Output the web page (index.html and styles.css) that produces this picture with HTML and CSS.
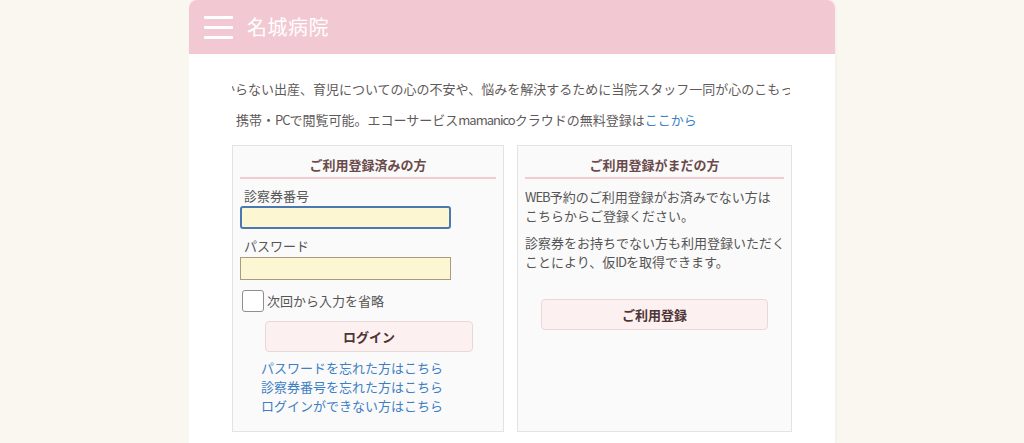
FILE: index.html
```html
<!DOCTYPE html>
<html lang="ja">
<head>
<meta charset="utf-8">
<title>名城病院</title>
<link rel="stylesheet" href="styles.css">
</head>
<body>
<div class="page">
  <header class="header">
    <span class="burger" aria-label="menu"><i></i><i></i><i></i></span>
    <h1 class="title">名城病院</h1>
  </header>
  <main class="content">
    <div class="marquee"><span class="marquee-text">分からない出産、育児についての心の不安や、悩みを解決するために当院スタッフ一同が心のこもったサポートをいたします。</span></div>
    <p class="note">携帯・<span class="latin">PC</span>で閲覧可能。エコーサービス<span class="latin">mamanico</span>クラウドの無料登録は<a class="link" href="#">ここから</a></p>
    <div class="boxes">
      <section class="box">
        <h2 class="box-title">ご利用登録済みの方</h2>
        <label class="field-label">診察券番号</label>
        <div class="input input-focus"></div>
        <label class="field-label field-label-2">パスワード</label>
        <div class="input"></div>
        <div class="check-row"><span class="checkbox"></span><span>次回から入力を省略</span></div>
        <div class="btn btn-login">ログイン</div>
        <ul class="links">
          <li><a class="link" href="#">パスワードを忘れた方はこちら</a></li>
          <li><a class="link" href="#">診察券番号を忘れた方はこちら</a></li>
          <li><a class="link" href="#">ログインができない方はこちら</a></li>
        </ul>
      </section>
      <section class="box">
        <h2 class="box-title">ご利用登録がまだの方</h2>
        <p class="box-text"><span class="latin">WEB</span>予約のご利用登録がお済みでない方は<br>こちらからご登録ください。</p>
        <p class="box-text box-text-2">診察券をお持ちでない方も利用登録いただく<br>ことにより、仮<span class="latin">ID</span>を取得できます。</p>
        <div class="btn btn-register">ご利用登録</div>
      </section>
    </div>
  </main>
</div>
</body>
</html>
```
FILE: styles.css
```css
* { box-sizing: border-box; }
html, body { margin: 0; padding: 0; }
body {
  background: #faf6f0;
  font-family: "Noto Sans CJK JP", "Noto Sans", sans-serif;
  color: #5a5555;
  font-size: 13px;
  overflow: hidden;
}
.page {
  width: 646px;
  margin: 0 auto;
  background: #fff;
  min-height: 443px;
  box-shadow: 1px 0 3px rgba(0,0,0,0.04);
  border-radius: 8px 8px 0 0;
}
.header {
  height: 54px;
  background: #f2c9d2;
  border-radius: 8px 8px 0 0;
  display: flex;
  align-items: center;
  padding-left: 15px;
}
.burger {
  width: 29px;
  display: flex;
  flex-direction: column;
  gap: 7px;
}
.burger i {
  display: block;
  height: 3px;
  background: #fff;
  border-radius: 1px;
}
.title {
  margin: 0 0 0 14px;
  font-size: 20px;
  font-weight: 400;
  color: #fff;
  line-height: 1;
  letter-spacing: 0.5px;
}
.content {
  padding: 24px 42px 0 43px;
}
.latin { letter-spacing: -1px; }
.marquee {
  overflow: hidden;
  white-space: nowrap;
  line-height: 20px;
  width: 558px;
  color: #5f5a5a;
}
.marquee-text {
  display: inline-block;
  margin-left: -23px;
  margin-top: 1px;
}
.note {
  margin: 11px 0 0 4px;
  line-height: 20px;
  color: #5f5a5a;
  white-space: nowrap;
}
.link {
  color: #3d7fc4;
  text-decoration: none;
}
.boxes {
  margin-top: 15px;
  display: grid;
  grid-template-columns: 272px 275px;
  gap: 13px;
}
.box {
  height: 287px;
  background: #fbfafa;
  border: 1px solid #e5e2e2;
  padding: 9px 7px 0 7px;
}
.box-title {
  margin: 0;
  font-size: 13px;
  font-weight: 700;
  line-height: 20px;
  text-align: center;
  color: #6a4a4a;
  padding-bottom: 2px;
  border-bottom: 2px solid #f1cdd3;
}
.field-label {
  display: block;
  margin: 7px 0 0 4px;
  line-height: 20px;
  color: #555;
}
.field-label-2 { margin-top: 7px; }
.input {
  width: 211px;
  height: 23px;
  background: #fcf6d2;
  border: 1px solid #a99b7e;
}
.input-focus {
  border: 2px solid #4b78b0;
  border-radius: 3px;
}
.field-label-2 + .input { margin-top: 1px; }
.check-row {
  display: flex;
  align-items: center;
  margin: 10px 0 0 2px;
  line-height: 20px;
  color: #555;
}
.checkbox {
  width: 22px;
  height: 22px;
  background: #fff;
  border: 1px solid #8f8f8f;
  border-radius: 3px;
  margin-right: 3px;
}
.btn {
  height: 31px;
  background: #fcf0f0;
  border: 1px solid #e9d8d8;
  border-radius: 4px;
  display: flex;
  align-items: center;
  justify-content: center;
  font-weight: 700;
  color: #4e3434;
}
.btn-login {
  width: 208px;
  margin: 9px 0 0 25px;
}
.links {
  list-style: none;
  margin: 6px 0 0 21px;
  padding: 0;
  line-height: 19px;
}
.box-text {
  margin: 8px -6px 0 0;
  line-height: 19px;
  color: #555;
  white-space: nowrap;
}
.box-text-2 { margin-top: 8px; }
.btn-register {
  width: 227px;
  margin: 28px 0 0 16px;
}
```
